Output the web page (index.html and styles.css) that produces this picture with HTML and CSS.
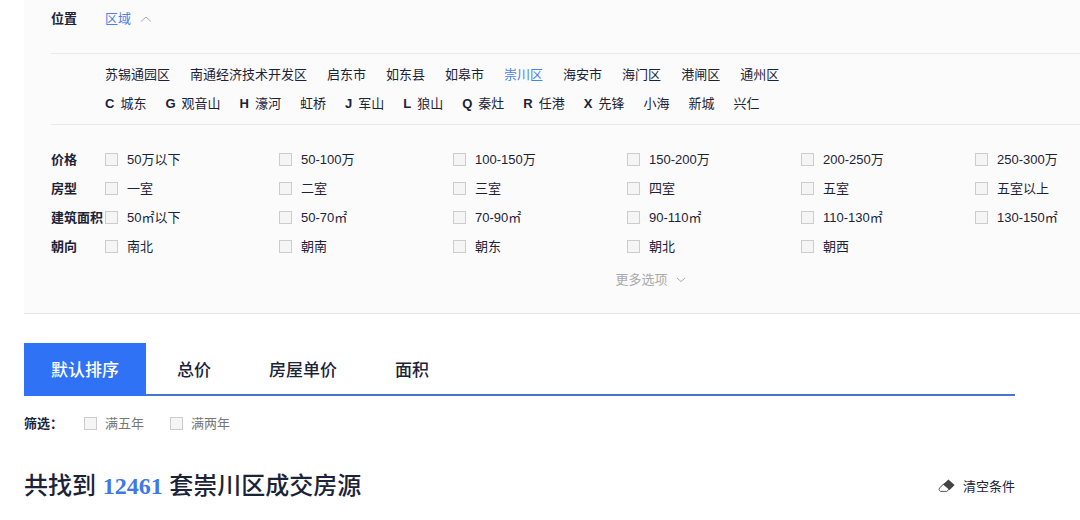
FILE: index.html
```html
<!DOCTYPE html>
<html lang="zh-CN">
<head>
    <meta charset="UTF-8">
    <meta name="viewport" content="width=device-width, initial-scale=1">
    <title>崇川区成交房源</title>
    <link rel="stylesheet" href="styles.css">
</head>
<body>
    <section class="filter">
        <div class="position">
            <span class="row-label">位置</span>
            <button class="position-btn" type="button">区域
                <svg class="arrow" width="12" height="6" viewBox="0 0 12 6"><path d="M1 5.5L6 1l5 4.5"/></svg>
            </button>
        </div>
        <div class="areas">
            <div class="area-row">
                <a href="#">苏锡通园区</a>
                <a href="#">南通经济技术开发区</a>
                <a href="#">启东市</a>
                <a href="#">如东县</a>
                <a href="#">如皋市</a>
                <a href="#" class="selected">崇川区</a>
                <a href="#">海安市</a>
                <a href="#">海门区</a>
                <a href="#">港闸区</a>
                <a href="#">通州区</a>
            </div>
            <div class="area-row streets">
                <a href="#"><b>C</b>城东</a>
                <a href="#"><b>G</b>观音山</a>
                <a href="#"><b>H</b>濠河</a>
                <a href="#">虹桥</a>
                <a href="#"><b>J</b>军山</a>
                <a href="#"><b>L</b>狼山</a>
                <a href="#"><b>Q</b>秦灶</a>
                <a href="#"><b>R</b>任港</a>
                <a href="#"><b>X</b>先锋</a>
                <a href="#">小海</a>
                <a href="#">新城</a>
                <a href="#">兴仁</a>
            </div>
        </div>
        <div class="options">
            <div class="row">
                <span class="row-label">价格</span>
                <div class="row-list">
                    <label><input type="checkbox">50万以下</label>
                    <label><input type="checkbox">50-100万</label>
                    <label><input type="checkbox">100-150万</label>
                    <label><input type="checkbox">150-200万</label>
                    <label><input type="checkbox">200-250万</label>
                    <label><input type="checkbox">250-300万</label>
                </div>
            </div>
            <div class="row">
                <span class="row-label">房型</span>
                <div class="row-list">
                    <label><input type="checkbox">一室</label>
                    <label><input type="checkbox">二室</label>
                    <label><input type="checkbox">三室</label>
                    <label><input type="checkbox">四室</label>
                    <label><input type="checkbox">五室</label>
                    <label><input type="checkbox">五室以上</label>
                </div>
            </div>
            <div class="row">
                <span class="row-label">建筑面积</span>
                <div class="row-list">
                    <label><input type="checkbox">50㎡以下</label>
                    <label><input type="checkbox">50-70㎡</label>
                    <label><input type="checkbox">70-90㎡</label>
                    <label><input type="checkbox">90-110㎡</label>
                    <label><input type="checkbox">110-130㎡</label>
                    <label><input type="checkbox">130-150㎡</label>
                </div>
            </div>
            <div class="row">
                <span class="row-label">朝向</span>
                <div class="row-list">
                    <label><input type="checkbox">南北</label>
                    <label><input type="checkbox">朝南</label>
                    <label><input type="checkbox">朝东</label>
                    <label><input type="checkbox">朝北</label>
                    <label><input type="checkbox">朝西</label>
                </div>
            </div>
        </div>
        <div class="more">
            <button class="more-btn" type="button">更多选项
                <svg class="arrow" width="10" height="6" viewBox="0 0 10 6"><path d="M1 1l4 3.5L9 1"/></svg>
            </button>
        </div>
    </section>

    <main class="content">
        <nav class="tabs">
            <button class="tab active" type="button">默认排序</button>
            <button class="tab" type="button">总价</button>
            <button class="tab" type="button">房屋单价</button>
            <button class="tab" type="button">面积</button>
        </nav>
        <div class="sift">
            <span class="sift-label">筛选：</span>
            <label><input type="checkbox">满五年</label>
            <label><input type="checkbox">满两年</label>
        </div>
        <div class="total">
            <h1>共找到 <span class="num">12461</span> 套崇川区成交房源</h1>
            <button class="clear-btn" type="button">
                <svg width="17" height="14" viewBox="0 0 17 14">
                    <path class="eraser-body" d="M6 4.5L1.6 9q-1.2 1.4 0 2.6l.8.8h6.4l3-2.9z"/>
                    <path class="eraser-head" d="M10.4.4l6.2 5.5-5 5L5 5.4z"/>
                </svg>
                清空条件
            </button>
        </div>
    </main>
</body>
</html>
```

FILE: styles.css
```css
body{
    margin: 0;
    background-color: #fff;
    color: #1b2338;
    font-family: "Liberation Sans", "Noto Sans CJK SC", sans-serif;
    font-size: 13px;
    line-height: 29px;
}
a{
    color: inherit;
    text-decoration: none;
}
button{
    display: flex;
    align-items: center;
    padding: 0;
    border: none;
    background: none;
    color: inherit;
    font: inherit;
    cursor: pointer;
}
label{
    display: flex;
    align-items: center;
    gap: 9px;
    white-space: nowrap;
    cursor: pointer;
}
input[type="checkbox"]{
    appearance: none;
    flex: none;
    box-sizing: border-box;
    width: 13px;
    height: 13px;
    margin: 0;
    border: 1px solid #ccc;
    background-color: #f5f5f5;
}
input[type="checkbox"]:checked{
    background-color: #3072f6;
}
.arrow{
    fill: none;
    stroke: #aaa;
}

/* 筛选面板 */
.filter{
    margin-left: 24px;
    padding: 0 0 19px 27px;
    border-bottom: 1px solid #e6e6e6;
    background-color: #fbfbfb;
}
.position{
    display: flex;
    padding: 4px 0 20px;
}
.row-label{
    flex: none;
    width: 54px;
    font-weight: bold;
    white-space: nowrap;
}
.position-btn{
    gap: 9px;
    color: #4a80e8;
}
.areas{
    padding: 6px 0 6px 54px;
    border-top: 1px solid #e9e9e9;
    border-bottom: 1px solid #e9e9e9;
}
.area-row{
    display: flex;
    flex-wrap: wrap;
    column-gap: 20px;
}
.streets{
    column-gap: 19px;
}
.streets b{
    margin-right: 6px;
}
.area-row .selected{
    color: #4a80e8;
}
.options{
    padding-top: 20px;
}
.row{
    display: flex;
}
.row-list{
    flex: 1;
    display: grid;
    grid-template-columns: repeat(5, 174px) 1fr;
}
.more{
    display: flex;
    justify-content: center;
    padding: 4px 0 0 170px;
}
.more-btn{
    gap: 8px;
    color: #aaa;
}

/* 排序和结果 */
.content{
    padding: 29px 65px 20px 24px;
}
.tabs{
    display: flex;
    gap: 4px;
    border-bottom: 2px solid #4576d0;
}
.tab{
    margin-bottom: -2px;
    padding: 13px 27px 11px;
    font-size: 17px;
    font-weight: 500;
}
.tab.active{
    background-color: #3072f6;
    color: #fff;
}
.sift{
    display: flex;
    gap: 26px;
    padding-top: 13px;
    color: #777;
}
.sift label{
    gap: 8px;
}
.sift-label{
    width: 34px;
    color: #1b2338;
    font-weight: bold;
    white-space: nowrap;
}
.total{
    display: flex;
    justify-content: space-between;
    align-items: center;
    padding-top: 30px;
}
h1{
    margin: 0;
    font-size: 24px;
    font-weight: 500;
    line-height: 36px;
}
.num{
    color: #4078e6;
    font-family: "Liberation Serif", serif;
    font-weight: bold;
}
.clear-btn{
    gap: 8px;
}
.eraser-body{
    fill: #fff;
    stroke: #555;
}
.eraser-head{
    fill: #444;
}
```
